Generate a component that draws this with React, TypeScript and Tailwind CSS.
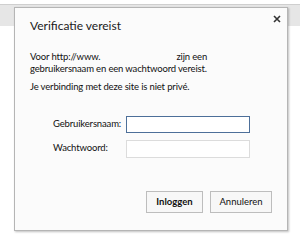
export default function App() {
  return (
    <div className="relative h-[245px] w-[300px] overflow-hidden bg-white" style={{ fontFamily: 'Lato, "Noto Sans", sans-serif' }}>
      <div className="h-[4px] bg-white" />
      <div className="h-[22px] border-t border-[#cfcfcf] bg-[#e6e6e6]" />

      <div className="absolute left-[14px] top-[7px] flex h-[224px] w-[274px] flex-col border border-[#b5b5b5] bg-[#fbfbfb] shadow-[1px_1px_2px_rgba(0,0,0,0.25)]">
        <div className="flex items-start justify-between pl-[15px] pr-[6px] pt-[10px]">
          <h1 className="text-[12px] leading-[15px] text-[#1a1a1a]">Verificatie vereist</h1>
          <svg className="mt-[-3px]" width="8" height="8" viewBox="0 0 8 8">
            <path d="M1 1L7 7M7 1L1 7" stroke="#333" strokeWidth="1.6" />
          </svg>
        </div>

        <div className="mt-[18px] px-[15px] text-[9.5px] leading-[12px] tracking-[-0.15px] text-[#111]">
          <p>
            Voor http://www.<span className="inline-block w-[76px]" />zijn een
            <br />
            gebruikersnaam en een wachtwoord vereist.
          </p>
          <p className="mt-[6px]">Je verbinding met deze site is niet privé.</p>
        </div>

        <div className="mt-[22.5px] grid grid-cols-[73px_124px] items-center gap-y-[7px] pl-[38px] text-[9.5px] tracking-[-0.15px] text-[#111]">
          <label className="whitespace-nowrap">Gebruikersnaam:</label>
          <input className="h-[17px] border border-[#4d6f99] bg-white outline-none" />
          <label className="whitespace-nowrap">Wachtwoord:</label>
          <input className="h-[18px] border border-[#dcdcdc] bg-white outline-none" />
        </div>

        <div className="mt-auto mb-[17px] flex justify-end gap-[7px] pr-[15px] text-[9.5px] text-[#111]">
          <button className="h-[22px] w-[57px] border border-[#bdbdbd] bg-[#f7f7f7] font-bold">Inloggen</button>
          <button className="h-[22px] w-[62px] border border-[#bdbdbd] bg-[#f7f7f7]">Annuleren</button>
        </div>
      </div>
    </div>
  );
}
